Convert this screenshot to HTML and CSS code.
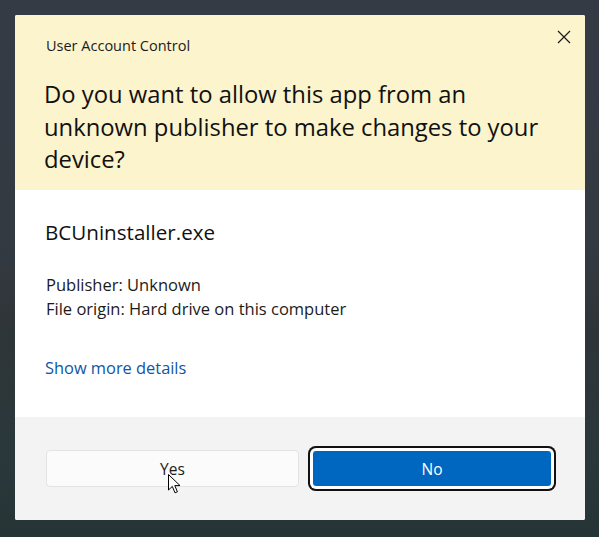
FILE: index.html
```html
<!DOCTYPE html>
<html>
<head>
<meta charset="utf-8">
<link rel="stylesheet" href="styles.css">
</head>
<body>
<div class="dialog">
  <div class="header">
    <div class="caption-row">
      <div class="caption">User Account Control</div>
      <button class="close" aria-label="Close">
        <svg width="14" height="14" viewBox="0 0 14 14"><path d="M1 1L13 13M13 1L1 13" stroke="#1a1a1a" stroke-width="1.2" fill="none"/></svg>
      </button>
    </div>
    <h1 class="question">Do you want to allow this app from an unknown publisher to make changes to your device?</h1>
  </div>
  <div class="content">
    <div class="app-name">BCUninstaller.exe</div>
    <div class="meta">
      <div>Publisher: Unknown</div>
      <div>File origin: Hard drive on this computer</div>
    </div>
    <a class="more" href="#">Show more details</a>
  </div>
  <div class="footer">
    <button class="btn btn-yes">Yes</button>
    <button class="btn btn-no">No</button>
  </div>
  <svg class="cursor" width="13" height="20" viewBox="0 0 13 20"><path d="M0.5 0.5 L0.5 16 L4.3 12.4 L7 18.8 L9.4 17.8 L6.8 11.6 L12 11.6 Z" fill="#fff" stroke="#000" stroke-width="1" stroke-linejoin="miter"/></svg>
</div>
</body>
</html>
```
FILE: styles.css
```css
html, body {
  margin: 0;
  padding: 0;
}
body {
  width: 599px;
  height: 537px;
  overflow: hidden;
  background: linear-gradient(180deg, #353b44 0%, #343a42 45%, #2f3538 60%, #2a383b 85%, #263436 100%);
  font-family: "Open Sans", "Noto Sans", sans-serif;
  color: #1b1b1b;
}
.dialog {
  position: relative;
  margin: 15px 0 0 15px;
  width: 570px;
  height: 505px;
  display: flex;
  flex-direction: column;
  border-radius: 2px;
  overflow: hidden;
  background: #fff;
}
.header {
  background: #fbf4cd;
  padding: 20px 0 14px 29px;
  height: 141px;
}
.caption-row {
  display: flex;
  justify-content: space-between;
  align-items: flex-start;
}
.caption {
  font-size: 14.5px;
  line-height: 22px;
  padding-left: 2px;
}
.close {
  border: 0;
  background: transparent;
  padding: 0;
  margin: 0 14px 0 0;
  width: 14px;
  height: 14px;
  position: relative;
  top: -5px;
}
.close svg { display: block; }
.question {
  margin: 21px 0 0 0;
  font-weight: 400;
  font-size: 23.8px;
  line-height: 32.5px;
  width: 520px;
  color: #111;
}
.content {
  flex: 1;
  background: #fff;
  padding: 28px 30px 0 30px;
}
.app-name {
  font-size: 20.6px;
  line-height: 28px;
  color: #111;
}
.meta {
  margin-top: 27px;
  font-size: 16.5px;
  line-height: 24px;
  padding-left: 1px;
}
.more {
  display: inline-block;
  margin-top: 35px;
  font-size: 16.4px;
  line-height: 24px;
  color: #0d56a6;
  text-decoration: none;
}
.footer {
  height: 103px;
  box-sizing: border-box;
  background: #f3f3f3;
  display: flex;
  align-items: flex-start;
  padding: 33px 0 0 31px;
  gap: 14px;
}
.btn {
  font-family: "Open Sans", "Noto Sans", sans-serif;
  font-size: 15.5px;
  border-radius: 4px;
  padding: 0;
}
.btn-yes {
  width: 253px;
  height: 37px;
  background: #fbfbfb;
  border: 1px solid #e3e3e3;
  color: #1b1b1b;
}
.btn-no {
  margin-top: 1px;
  width: 238px;
  height: 35px;
  background: #0067c0;
  border: 0;
  color: #fff;
  box-shadow: 0 0 0 3px #fff, 0 0 0 5px #111;
  border-radius: 3px;
}
.cursor {
  position: absolute;
  left: 153px;
  top: 459px;
}
```
